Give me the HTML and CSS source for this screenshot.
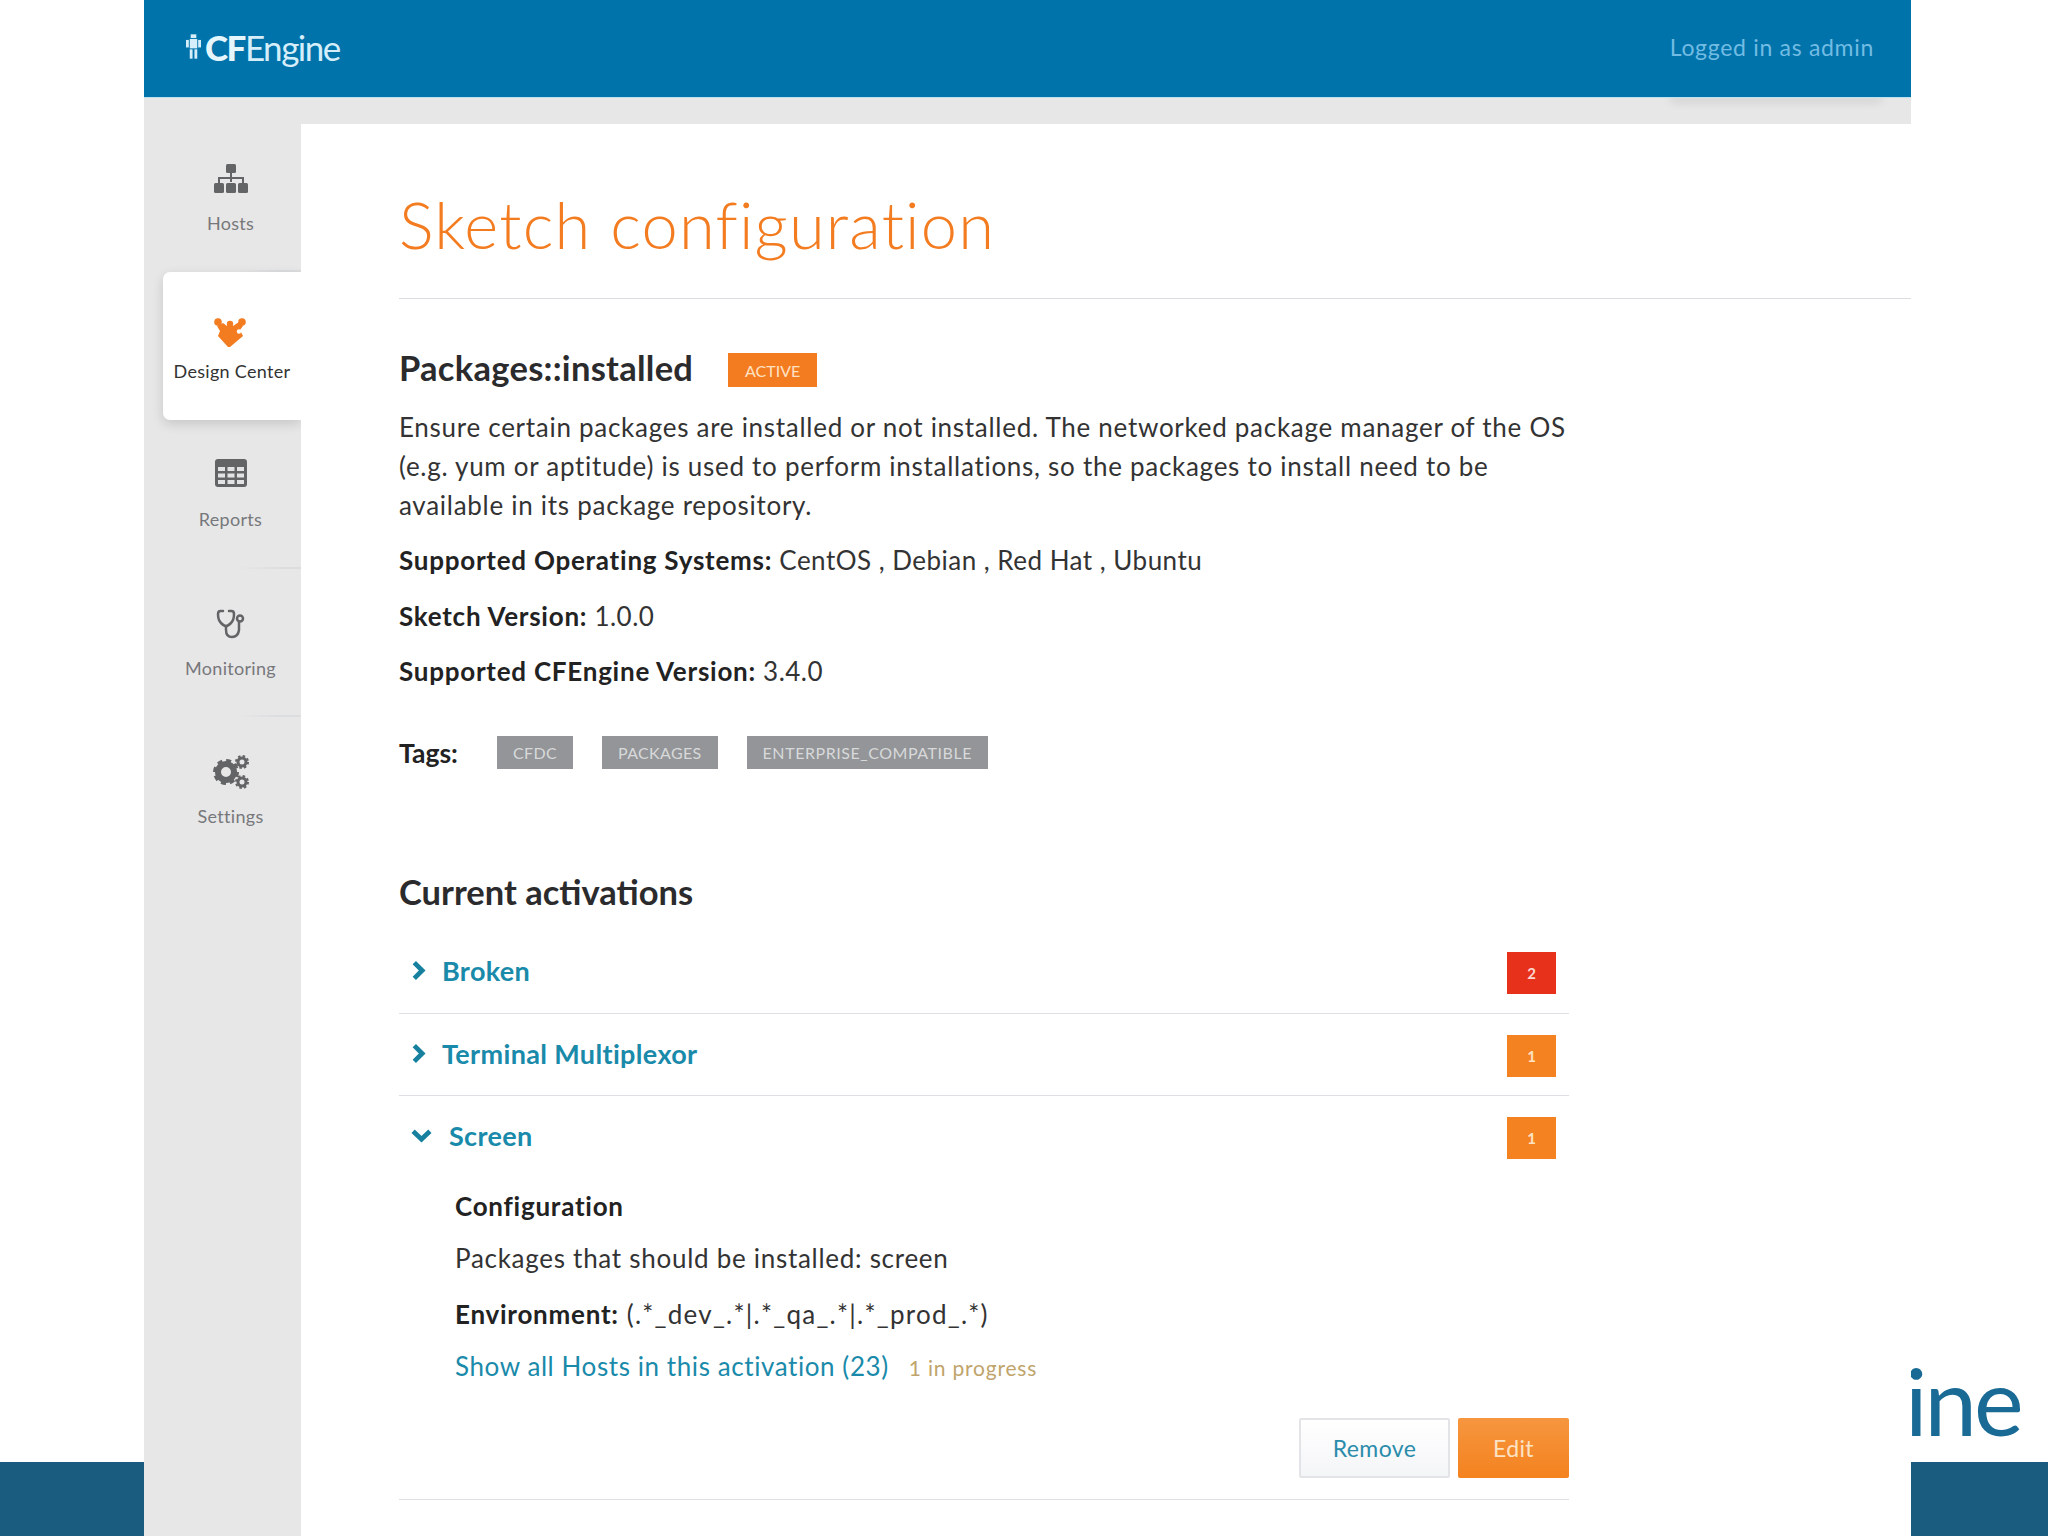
FILE: index.html
```html
<!DOCTYPE html>
<html lang="en">
<head>
<meta charset="utf-8">
<title>Sketch configuration</title>
<link rel="stylesheet" href="styles.css">
</head>
<body>
<div class="slide">
  <div class="band"></div>
  <div class="slide-word">ine</div>
  <div class="window">
    <header class="topbar">
      <div class="logo">
        <svg class="robot" viewBox="0 0 16 26" width="15" height="25">
          <rect x="5" y="0" width="6" height="4" fill="#d5eefa"/>
          <rect x="4" y="5" width="8" height="10" fill="#d5eefa"/>
          <rect x="0" y="6" width="3" height="8" fill="#d5eefa"/>
          <rect x="13" y="6" width="3" height="8" fill="#d5eefa"/>
          <rect x="4" y="16" width="3" height="10" fill="#d5eefa"/>
          <rect x="9" y="16" width="3" height="10" fill="#d5eefa"/>
        </svg>
        <span class="logo-text"><b>CF</b>Engine</span>
      </div>
      <div class="login">Logged in as admin</div>
    </header>
    <div class="body">
      <nav class="sidebar">
        <a class="nav-item">
          <svg class="nav-icon" viewBox="0 0 34 30" width="34" height="30">
            <rect x="12" y="0" width="10" height="9" rx="1.500" fill="#636466"/>
            <path d="M17 9v9M5 19v-5h24v5" fill="none" stroke="#636466" stroke-width="2"/>
            <rect x="0" y="19" width="10" height="10" rx="1.500" fill="#636466"/>
            <rect x="12" y="19" width="10" height="10" rx="1.500" fill="#636466"/>
            <rect x="24" y="19" width="10" height="10" rx="1.500" fill="#636466"/>
          </svg>
          <span>Hosts</span>
        </a>
        <a class="nav-item active">
          <svg class="nav-icon" viewBox="0 0 32 30" width="32" height="30">
            <circle cx="4" cy="4" r="3.800" fill="#f47c20"/>
            <circle cx="28" cy="4" r="3.800" fill="#f47c20"/>
            <circle cx="16" cy="6" r="3.200" fill="#f47c20"/>
            <path d="M3 8l6-3 4 3h6l6-4 4 4-3 4 3 6-13 11h-2L4 18l2-5z" fill="#f47c20"/>
            <circle cx="25" cy="13.500" r="2.200" fill="#fff"/>
          </svg>
          <span>Design Center</span>
        </a>
        <a class="nav-item">
          <svg class="nav-icon icon-raised" viewBox="0 0 32 28" width="32" height="28">
            <rect x="0" y="0" width="32" height="28" rx="3" fill="#636466"/>
            <path d="M3 8h7v4H3zM12.500 8h7v4h-7zM22 8h7v4h-7zM3 14.500h7v4H3zM12.500 14.500h7v4h-7zM22 14.500h7v4h-7zM3 21h7v4H3zM12.500 21h7v4h-7zM22 21h7v4h-7z" fill="#e2e3e4"/>
          </svg>
          <span>Reports</span>
        </a>
        <a class="nav-item">
          <svg class="nav-icon" viewBox="0 0 30 30" width="30" height="30">
            <path d="M7 2H4.500Q2 2 2 5q0 6 3 9t5 3q2 0 5-3t3-9q0-3-2.500-3H13" fill="none" stroke="#636466" stroke-width="2.500" stroke-linecap="round"/>
            <path d="M10 17v4q0 7 6 7t7-7v-8" fill="none" stroke="#636466" stroke-width="2.500"/>
            <circle cx="24" cy="9.500" r="3" fill="none" stroke="#636466" stroke-width="2.500"/>
          </svg>
          <span>Monitoring</span>
        </a>
        <a class="nav-item last">
          <svg class="nav-icon" viewBox="0 0 36 34" width="36" height="34">
            <circle cx="13" cy="17" r="8" fill="none" stroke="#636466" stroke-width="6"/>
            <circle cx="13" cy="17" r="11.500" fill="none" stroke="#636466" stroke-width="3" stroke-dasharray="5 4"/>
            <circle cx="29" cy="7" r="4" fill="none" stroke="#636466" stroke-width="3"/>
            <circle cx="29" cy="7" r="6" fill="none" stroke="#636466" stroke-width="2" stroke-dasharray="2.500 2.200"/>
            <circle cx="29" cy="27" r="4" fill="none" stroke="#636466" stroke-width="3"/>
            <circle cx="29" cy="27" r="6" fill="none" stroke="#636466" stroke-width="2" stroke-dasharray="2.500 2.200"/>
          </svg>
          <span>Settings</span>
        </a>
      </nav>
      <main class="content">
        <h1 class="page-title">Sketch configuration</h1>
        <div class="sketch-head">
          <h2 class="section-title">Packages::installed</h2>
          <span class="status">ACTIVE</span>
        </div>
        <section class="summary">
          <p class="para first">Ensure certain packages are installed or not installed. The networked package manager of the OS (e.g. yum or aptitude) is used to perform installations, so the packages to install need to be available in its package repository.</p>
          <p class="para meta"><b>Supported Operating Systems:</b> CentOS , Debian , Red Hat , Ubuntu</p>
          <p class="para meta"><b>Sketch Version:</b> 1.0.0</p>
          <p class="para meta"><b>Supported CFEngine Version:</b> 3.4.0</p>
          <div class="tags">
            <b class="tags-label">Tags:</b>
            <span class="tag">CFDC</span>
            <span class="tag">PACKAGES</span>
            <span class="tag tag-wide">ENTERPRISE_COMPATIBLE</span>
          </div>
          <h2 class="section-title activations">Current activations</h2>
          <div class="row row-a">
            <div class="row-title">
              <svg class="chev" viewBox="0 0 14 20" width="15" height="21"><path d="M3 2.500l7.500 7.500-7.500 7.500" fill="none" stroke="#17809f" stroke-width="4.500"/></svg>
              <a class="link">Broken</a>
            </div>
            <span class="count red">2</span>
          </div>
          <div class="row row-b">
            <div class="row-title">
              <svg class="chev" viewBox="0 0 14 20" width="15" height="21"><path d="M3 2.500l7.500 7.500-7.500 7.500" fill="none" stroke="#17809f" stroke-width="4.500"/></svg>
              <a class="link">Terminal Multiplexor</a>
            </div>
            <span class="count">1</span>
          </div>
          <div class="row row-c open">
            <div class="row-title">
              <svg class="chev-down" viewBox="0 0 20 14" width="21" height="15"><path d="M2 3l8 7.500 8-7.500" fill="none" stroke="#17809f" stroke-width="4.500"/></svg>
              <a class="link">Screen</a>
            </div>
            <span class="count">1</span>
          </div>
          <div class="details">
            <p class="para config"><b>Configuration</b></p>
            <p class="para d-pack">Packages that should be installed: screen</p>
            <p class="para d-env"><b>Environment:</b> (.*_dev_.*|.*_qa_.*|.*_prod_.*)</p>
            <p class="para d-link"><a class="link">Show all Hosts in this activation (23)</a><span class="progress">1 in progress</span></p>
          </div>
          <div class="actions">
            <button class="btn">Remove</button>
            <button class="btn primary">Edit</button>
          </div>
        </section>
      </main>
    </div>
  </div>
</div>
</body>
</html>
```
FILE: styles.css
```css
* { box-sizing: border-box; }
html, body { margin: 0; padding: 0; background: #fff; }
body { font-family: "Lato", "Open Sans", sans-serif; color: #2b2b2d; }

.slide { position: relative; width: 2048px; height: 1536px; overflow: hidden; background: #fff; }
.band { position: absolute; left: 0; right: 0; top: 1462px; height: 74px; background: #1a5b80; }
.slide-word {
  position: absolute; left: 1905px; top: 1335px;
  font-size: 94px; line-height: 130px; font-weight: 400; letter-spacing: -3px; color: #1a6a96;
}

.window { position: absolute; z-index: 0; left: 144px; top: 0; width: 1767px; height: 1536px; background: #e7e7e8; display: flex; flex-direction: column; overflow: hidden; }

.topbar { height: 98px; flex: none; display: flex; align-items: center; justify-content: space-between; padding: 0 37px 4px 42px; background: #0073ab; border-bottom: 1px solid #bfe0f0; position: relative; }
.topbar::after { content: ""; position: absolute; z-index: -1; right: 30px; top: 90px; width: 210px; height: 6px; box-shadow: 0 6px 10px rgba(0,0,0,.12); }
.logo { display: flex; align-items: center; gap: 4px; color: #d5eefa; }
.logo-text { font-size: 35px; line-height: 44px; letter-spacing: -1.500px; font-weight: 400; }
.logo-text b { font-weight: 900; color: #e6f6fd; }
.login { font-size: 23px; color: #72bce3; letter-spacing: .7px; }

.body { flex: 1; display: flex; min-height: 0; padding-top: 26px; }

.sidebar { width: 157px; flex: none; display: flex; flex-direction: column; }
.nav-item { height: 148.200px; display: flex; flex-direction: column; align-items: center; position: relative; padding-top: 38px; padding-left: 16px; font-size: 18px; color: #77787b; border-bottom: 2px solid transparent; border-image: linear-gradient(to right, transparent 60%, #dcdddf 85%) 1; }
.nav-item span { position: absolute; top: 88px; left: 16px; right: 0; text-align: center; letter-spacing: .3px; }
.nav-icon { height: 34px; }
.icon-raised { margin-top: -2px; }
.nav-item.active { background: #fff; margin-left: 19px; border: 0; border-radius: 7px 0 0 7px; color: #333; box-shadow: 0 4px 12px rgba(0,0,0,.14); z-index: 1; padding-top: 44px; padding-left: 0; padding-right: 4px; }
.nav-item.active span { left: 0; right: 0; top: 88px; }
.nav-item.last { border: 0; }

.content { flex: 1; min-width: 0; background: #fff; padding-left: 98px; position: relative; z-index: 2; }
.page-title { margin: 0; padding: 49px 0 23px; border-bottom: 1px solid #dcdde0; font-size: 65px; line-height: 102px; font-weight: 300; color: #f47c20; letter-spacing: 1.200px; }

.sketch-head { display: flex; align-items: center; margin-top: 46px; height: 46px; }
.sketch-head .section-title { letter-spacing: .27px; }
.section-title { margin: 0; font-size: 34.500px; line-height: 46px; font-weight: 700; color: #2b2b2d; }
.status { margin-left: 35px; margin-top: 4px; width: 89px; height: 34px; display: flex; align-items: center; justify-content: center; background: #f47c20; color: #fde2c4; font-size: 16px; }

.summary { width: 1170px; }
.para { margin: 16.500px 0 0; font-size: 26px; line-height: 39px; color: #333; letter-spacing: .72px; }
.para b { font-weight: 700; color: #222; letter-spacing: .75px; }
.para.meta { letter-spacing: .48px; }
.para.first { margin-top: 16.500px; }

.tags { display: flex; align-items: center; margin-top: 45px; height: 33px; }
.tags-label { font-size: 26.500px; width: 98px; color: #222; }
.tag { height: 33px; padding: 0 16px; margin-right: 29px; display: flex; align-items: center; background: #939598; color: #d8d9da; font-size: 16px; letter-spacing: .35px; }
.tag-wide { letter-spacing: .55px; }

.activations { margin-top: 100px; }

.row { display: flex; align-items: center; justify-content: space-between; padding-right: 13px; border-bottom: 1px solid #dfe0e3; }
.row-a { padding-top: 37px; padding-bottom: 19px; }
.row-b { padding-top: 21px; padding-bottom: 18px; }
.row-c { padding-top: 21px; border-bottom: 0; }
.row-title { display: flex; align-items: center; padding-bottom: 5px; padding-left: 12px; font-size: 27px; font-weight: 700; }
.chev { margin-right: 16px; }
.chev-down { margin-right: 17px; }
.link { color: #1a8aaa; }
.row-title .link { letter-spacing: .35px; }
.count { width: 49px; height: 42px; display: flex; align-items: center; justify-content: center; background: #f58220; color: #fde2c4; font-size: 15px; font-weight: 700; }
.count.red { background: #e8311a; color: #fbd6cf; }

.details { padding-left: 56px; }
.details .para { margin: 0; }
.details .para.config { margin-top: 28px; }
.details .para.d-pack { margin-top: 13px; }
.details .para.d-env { margin-top: 17px; letter-spacing: 1.250px; }
.details .para.d-link { margin-top: 13px; letter-spacing: .58px; }
.progress { margin-left: 20px; font-size: 21px; letter-spacing: .8px; color: #c0a46b; }

.actions { display: flex; justify-content: flex-end; gap: 8px; margin-top: 31px; padding-bottom: 21px; border-bottom: 1px solid #dfe0e3; }
.btn { height: 60px; font-family: inherit; font-size: 23px; border-radius: 2px; cursor: pointer; width: 151px; color: #2a8cab; background: linear-gradient(#fff, #f4f5f7); border: 2px solid #e3e4e7; letter-spacing: .4px; }
.btn.primary { width: 111px; color: #fde2c4; border: 0; background: linear-gradient(#f6963f, #f4821f); }
```
